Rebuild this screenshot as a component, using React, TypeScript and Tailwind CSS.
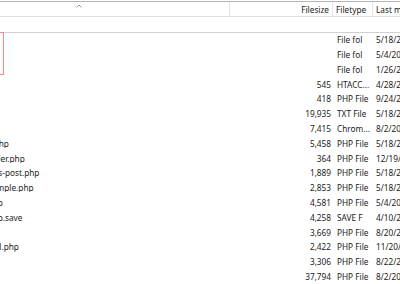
import React from "react";

type Row = { name: string; size: string; type: string; date: string };

const rows: Row[] = [
  { name: "wp-admin", size: "", type: "File fol", date: "5/18/2017 2:10:00 PM" },
  { name: "wp-content", size: "", type: "File fol", date: "5/4/2017 9:12:00 AM" },
  { name: "wp-includes", size: "", type: "File fol", date: "1/26/2017 3:44:00 PM" },
  { name: ".htaccess", size: "545", type: "HTACC...", date: "4/28/2017 1:00:00 PM" },
  { name: "index.php", size: "418", type: "PHP File", date: "9/24/2013 8:00:00 PM" },
  { name: "license.txt", size: "19,935", type: "TXT File", date: "5/18/2017 2:10:00 PM" },
  { name: "readme.html", size: "7,415", type: "Chrom...", date: "8/2/2017 6:00:00 PM" },
  { name: "wp-activate.php", size: "5,458", type: "PHP File", date: "5/18/2017 2:10:00 PM" },
  { name: "wp-blog-header.php", size: "364", type: "PHP File", date: "12/19/2015 6:00:00 AM" },
  { name: "wp-comments-post.php", size: "1,889", type: "PHP File", date: "5/18/2017 2:10:00 PM" },
  { name: "wp-config-sample.php", size: "2,853", type: "PHP File", date: "5/18/2017 2:10:00 PM" },
  { name: "wp-config.php", size: "4,581", type: "PHP File", date: "5/4/2017 9:12:00 AM" },
  { name: "wp-config.php.save", size: "4,258", type: "SAVE F", date: "4/10/2017 1:00:00 PM" },
  { name: "wp-cron.php", size: "3,669", type: "PHP File", date: "8/20/2017 1:00:00 PM" },
  { name: "wp-links-opml.php", size: "2,422", type: "PHP File", date: "11/20/2016 1:00:00 PM" },
  { name: "wp-load.php", size: "3,306", type: "PHP File", date: "8/22/2017 1:00:00 PM" },
  { name: "wp-login.php", size: "37,794", type: "PHP File", date: "8/2/2017 1:00:00 PM" },
];

export default function App() {
  return (
    <div
      className="relative w-[400px] h-[284px] overflow-hidden bg-white text-[#1a1a1a] text-[8.25px]"
      style={{ fontFamily: '"Noto Sans", "Open Sans", sans-serif' }}
    >
      <div className="h-[1px] bg-white" />
      <div className="h-[1px] bg-[#b4b4b4]" />
      <div className="ml-[-53px] w-[630px] flex flex-col">
        {/* header */}
        <div className="flex h-[15px] items-center leading-none border-b border-[#e2e2e2]">
          <div className="relative shrink-0 w-[283px] h-full border-r border-[#e5e5e5]">
            <svg
              className="absolute left-[129px] top-[2px]"
              width="6"
              height="4"
              viewBox="0 0 6 4"
            >
              <polyline points="0.5,3.5 3,1 5.5,3.5" fill="none" stroke="#9a9a9a" strokeWidth="1" />
            </svg>
          </div>
          <div className="shrink-0 w-[103px] h-full flex items-center justify-end pt-[2px] pr-[3px] border-r border-[#e5e5e5]">
            Filesize
          </div>
          <div className="shrink-0 w-[40px] h-full flex items-center pt-[2px] pl-[3px] border-r border-[#e5e5e5] overflow-hidden whitespace-nowrap">
            Filetype
          </div>
          <div className="shrink-0 w-[200px] h-full flex items-center pt-[2px] pl-[3px] whitespace-nowrap">
            Last modified
          </div>
        </div>
        {/* parent row */}
        <div className="h-[16px] border-b border-[#d0d0d0]" />
        {/* data rows */}
        {rows.map((r) => (
          <div key={r.name} className="flex h-[14.8px] items-center leading-none whitespace-nowrap">
            <div className="shrink-0 w-[283px] overflow-hidden">{r.name}</div>
            <div className="shrink-0 w-[103px] text-right pr-[2px]">{r.size}</div>
            <div className="shrink-0 w-[40px] overflow-hidden pl-[4px]">{r.type}</div>
            <div className="shrink-0 w-[200px] pl-[3px]">{r.date}</div>
          </div>
        ))}
      </div>
      <div className="absolute left-[-20px] top-[32px] w-[24px] h-[43px] border-[1.5px] border-[#f08c8c]" />
    </div>
  );
}
